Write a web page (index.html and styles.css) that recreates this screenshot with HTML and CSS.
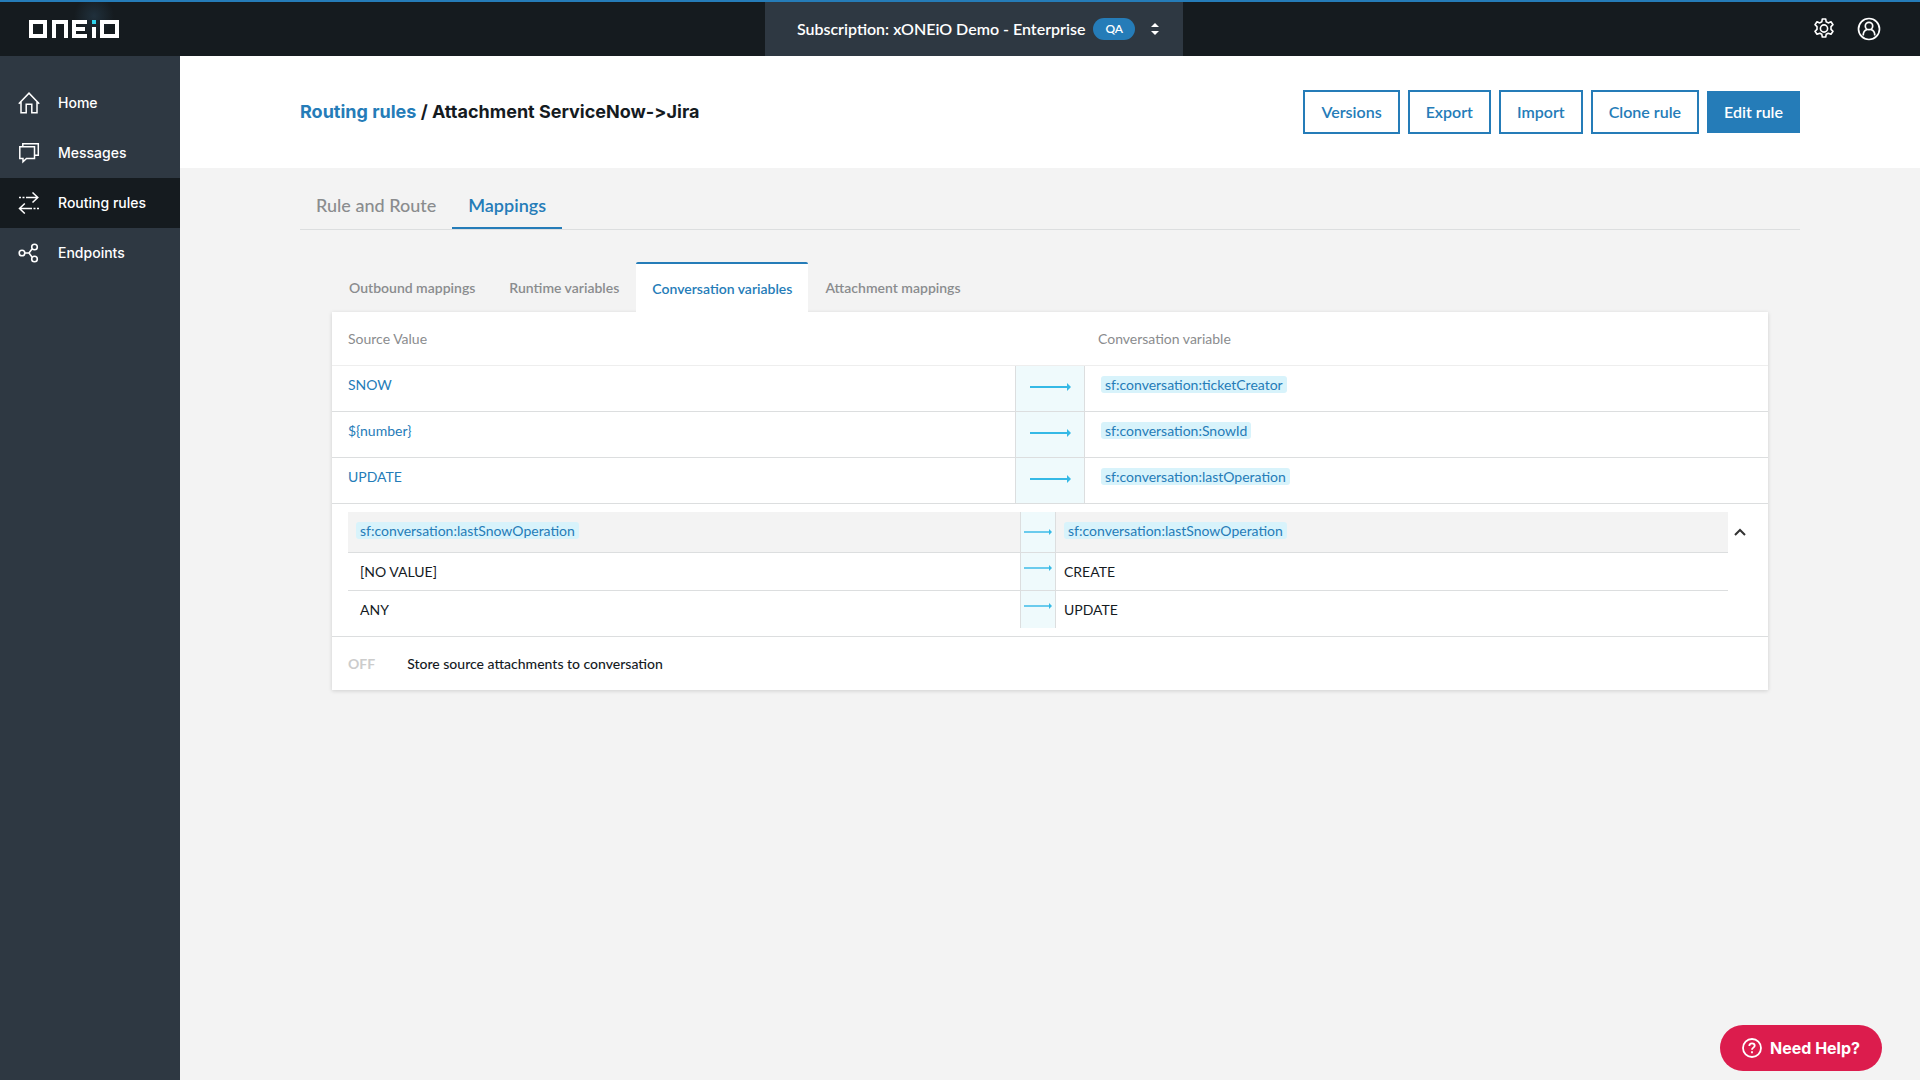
FILE: index.html
```html
<!DOCTYPE html>
<html lang="en">
<head>
    <meta charset="UTF-8">
    <meta name="viewport" content="width=device-width, initial-scale=1.0">
    <title>Routing rules - ONEiO</title>
    <link rel="stylesheet" href="styles.css">
</head>
<body>
    <!-- Arrow shapes used by the mapping tables -->
    <svg class="defs" aria-hidden="true">
        <symbol id="arrow" viewBox="0 0 41 8">
            <path d="M0 4h38" stroke="#35b9e6" stroke-width="2"/>
            <path d="M37 0l4 4-4 4z" fill="#35b9e6"/>
        </symbol>
        <symbol id="arrow-small" viewBox="0 0 28 6">
            <path d="M0 3h26" stroke="#6acbed" stroke-width="2"/>
            <path d="M25 0l3 3-3 3z" fill="#35b9e6"/>
        </symbol>
    </svg>

    <header class="topbar">
        <a class="logo" href="#" aria-label="ONEiO">
            <svg width="90" height="18" viewBox="0 0 90 18" fill="none" stroke="#fff" stroke-width="4">
                <rect x="2" y="2" width="14" height="14"/>
                <path d="M25 18V2h12v16"/>
                <path d="M58 2H45v14h13M45 9h11"/>
                <path d="M65 7v11"/>
                <path d="M65 0v4" stroke="#2fd5ee"/>
                <rect x="73" y="2" width="15" height="14"/>
            </svg>
        </a>
        <button class="subscription">
            Subscription: xONEiO Demo - Enterprise
            <span class="badge">QA</span>
            <svg width="8" height="12" viewBox="0 0 8 12" fill="#fff"><path d="M4 0l4 4H0zM4 12l4-4H0z"/></svg>
        </button>
        <div class="topbar-actions">
            <button class="icon-btn" aria-label="Settings">
                <svg width="22" height="22" viewBox="0 0 22 22" fill="none" stroke="#fff" stroke-width="1.6" stroke-linejoin="round">
                    <path d="M9.3 1h3.4l.5 2.8 2 1.1 2.8-1.2 2 3-2 1.9v2.8l2 1.9-2 3-2.8-1.1-2 1.1-.5 2.7H9.3l-.5-2.7-2-1.1L4 16.3l-2-3 2-1.9V8.6l-2-1.9 2-3 2.8 1.2 2-1.1z"/>
                    <circle cx="11" cy="10.5" r="3.6"/>
                </svg>
            </button>
            <button class="icon-btn" aria-label="Account">
                <svg width="24" height="24" viewBox="0 0 24 24" fill="none" stroke="#fff" stroke-width="1.7">
                    <circle cx="12" cy="12" r="10.5"/>
                    <circle cx="12" cy="9" r="3.7"/>
                    <path d="M6.2 18.5c0-3.5 2-5.5 4-6M17.8 18.5c0-3.5-2-5.5-4-6"/>
                </svg>
            </button>
        </div>
    </header>

    <div class="layout">
        <nav class="sidebar">
            <a class="nav-item" href="#">
                <svg width="22" height="22" viewBox="0 0 22 22" fill="none" stroke="#fff" stroke-width="1.5">
                    <path d="M.8 11.7L11 1.2l10.2 10.5M3 10v10.7h5.2v-8.5h5.6v8.5H19V10"/>
                </svg>
                Home
            </a>
            <a class="nav-item" href="#">
                <svg width="22" height="22" viewBox="0 0 22 22" fill="none" stroke="#fff" stroke-width="1.5">
                    <path d="M1.8 4.8h14.7v11.7H8.5l-3.5 3.3v-3.3H1.8z"/>
                    <path d="M4.8 4.5V1.8h15.5v11.5h-3.5"/>
                </svg>
                Messages
            </a>
            <a class="nav-item active" href="#">
                <svg width="22" height="22" viewBox="0 0 22 22" fill="none" stroke="#fff" stroke-width="1.5">
                    <path d="M8 5.5h12M14.5.5l5.3 5-5.3 5M1 5.5h2M4.5 5.5h2M14 16.5H1.5M6.8 11.5l-5.3 5 5.3 5M15.5 16.5h2M19 16.5h2"/>
                </svg>
                Routing rules
            </a>
            <a class="nav-item" href="#">
                <svg width="22" height="22" viewBox="0 0 22 22" fill="none" stroke="#fff" stroke-width="1.6">
                    <circle cx="4" cy="11" r="2.8"/>
                    <circle cx="16.5" cy="5" r="2.8"/>
                    <circle cx="16.5" cy="17" r="2.8"/>
                    <path d="M6.8 11h4.2l3-4M11 11l3 4"/>
                </svg>
                Endpoints
            </a>
        </nav>

        <main class="main">
            <div class="page-header">
                <div class="container page-header-row">
                    <h1 class="page-title"><a href="#">Routing rules</a> / Attachment ServiceNow-&gt;Jira</h1>
                    <div class="actions">
                        <button class="btn">Versions</button>
                        <button class="btn">Export</button>
                        <button class="btn">Import</button>
                        <button class="btn">Clone rule</button>
                        <button class="btn btn-primary">Edit rule</button>
                    </div>
                </div>
            </div>

            <div class="container">
                <nav class="tabs">
                    <a class="tab" href="#">Rule and Route</a>
                    <a class="tab active" href="#">Mappings</a>
                </nav>

                <section class="mappings">
                    <nav class="subtabs">
                        <a class="subtab" href="#">Outbound mappings</a>
                        <a class="subtab" href="#">Runtime variables</a>
                        <a class="subtab active" href="#">Conversation variables</a>
                        <a class="subtab" href="#">Attachment mappings</a>
                    </nav>

                    <div class="card">
                        <table class="map-table">
                            <thead>
                                <tr>
                                    <th>Source Value</th>
                                    <th class="arrow-head"></th>
                                    <th class="target-head">Conversation variable</th>
                                </tr>
                            </thead>
                            <tbody>
                                <tr>
                                    <td>SNOW</td>
                                    <td class="arrow-cell"><svg width="41" height="8"><use href="#arrow"/></svg></td>
                                    <td><span class="chip">sf:conversation:ticketCreator</span></td>
                                </tr>
                                <tr>
                                    <td>${number}</td>
                                    <td class="arrow-cell"><svg width="41" height="8"><use href="#arrow"/></svg></td>
                                    <td><span class="chip">sf:conversation:SnowId</span></td>
                                </tr>
                                <tr>
                                    <td>UPDATE</td>
                                    <td class="arrow-cell"><svg width="41" height="8"><use href="#arrow"/></svg></td>
                                    <td><span class="chip">sf:conversation:lastOperation</span></td>
                                </tr>
                            </tbody>
                        </table>

                        <div class="group">
                            <table class="value-table">
                                <thead>
                                    <tr>
                                        <th><span class="chip">sf:conversation:lastSnowOperation</span></th>
                                        <th class="arrow-cell"><svg width="28" height="6"><use href="#arrow-small"/></svg></th>
                                        <th><span class="chip">sf:conversation:lastSnowOperation</span></th>
                                    </tr>
                                </thead>
                                <tbody>
                                    <tr>
                                        <td>[NO VALUE]</td>
                                        <td class="arrow-cell"><svg width="28" height="6"><use href="#arrow-small"/></svg></td>
                                        <td>CREATE</td>
                                    </tr>
                                    <tr>
                                        <td>ANY</td>
                                        <td class="arrow-cell"><svg width="28" height="6"><use href="#arrow-small"/></svg></td>
                                        <td>UPDATE</td>
                                    </tr>
                                </tbody>
                            </table>
                            <button class="collapse-btn" aria-label="Collapse">
                                <svg width="12" height="8" viewBox="0 0 12 8" fill="none" stroke="#333" stroke-width="2"><path d="M1 7l5-5 5 5"/></svg>
                            </button>
                        </div>

                        <div class="store-row">
                            <span class="state">OFF</span>
                            <span>Store source attachments to conversation</span>
                        </div>
                    </div>
                </section>
            </div>
        </main>
    </div>

    <button class="help-btn">
        <svg width="20" height="20" viewBox="0 0 20 20" fill="none" stroke="#fff" stroke-width="1.8">
            <circle cx="10" cy="10" r="9"/>
            <path d="M7.3 8c0-1.7 1.2-2.7 2.7-2.7s2.7 1 2.7 2.4c0 1.9-2.7 2-2.7 4M10 13.3v2"/>
        </svg>
        Need Help?
    </button>
</body>
</html>
```
FILE: styles.css
```css
* {
    box-sizing: border-box;
}

body {
    margin: 0;
    min-height: 100vh;
    display: flex;
    flex-direction: column;
    font-family: Lato, sans-serif;
    font-size: 14px;
    line-height: 20px;
    color: #151b1f;
    background-color: #f3f3f3;
}

a {
    color: inherit;
    text-decoration: none;
}

button {
    font: inherit;
    border: none;
    cursor: pointer;
}

.defs {
    display: none;
}

/* Top bar */
.topbar {
    display: flex;
    justify-content: space-between;
    align-items: stretch;
    height: 56px;
    border-top: 2px solid #257cb8;
    background-color: #151b1f;
}

.logo {
    display: flex;
    align-items: center;
    padding: 0 16px 0 29px;
    background: radial-gradient(circle at 94px 14px, #20303c 0, #151b1f 20px);
}

.subscription {
    display: flex;
    align-items: center;
    gap: 8px;
    padding: 0 24px 0 32px;
    font-size: 16px;
    font-weight: 600;
    color: #fff;
    background-color: #2e3842;
}

.subscription svg {
    margin: 0 0 0 8px;
}

.badge {
    padding: 1px 12px;
    border-radius: 11px;
    font-size: 12px;
    background-color: #257cb8;
}

.topbar-actions {
    display: flex;
    align-items: center;
    justify-content: flex-end;
    gap: 22px;
    padding-right: 39px;
}

.icon-btn {
    display: flex;
    padding: 0;
    background: none;
}

/* Sidebar */
.layout {
    display: flex;
    flex: 1;
}

.sidebar {
    width: 180px;
    flex-shrink: 0;
    padding-top: 22px;
    background-color: #2e3842;
}

.nav-item {
    display: flex;
    align-items: center;
    gap: 18px;
    height: 50px;
    padding: 0 18px;
    font-family: Inter, sans-serif;
    font-size: 14px;
    font-weight: 500;
    color: #fff;
}

.nav-item.active {
    background-color: #151b1f;
}

/* Page header */
.main {
    flex: 1;
}

.container {
    max-width: 1500px;
    margin: 0 auto;
}

.page-header {
    background-color: #fff;
}

.page-header-row {
    display: flex;
    align-items: center;
    justify-content: space-between;
    height: 112px;
}

.page-title {
    margin: 0;
    font-family: Inter, sans-serif;
    font-size: 18px;
    font-weight: 700;
    font-variant-ligatures: none;
}

.page-title a {
    color: #257cb8;
}

.actions {
    display: flex;
    align-items: center;
    gap: 8px;
}

.btn {
    padding: 10px 16px;
    border: 2px solid #257cb8;
    font-size: 16px;
    font-weight: 600;
    color: #257cb8;
    background-color: #fff;
}

.btn-primary {
    padding: 11px 17px;
    border: none;
    color: #fff;
    background-color: #257cb8;
}

/* Tabs */
.tabs {
    display: flex;
    padding-top: 16px;
    border-bottom: 1px solid #dcdedf;
}

.tab {
    padding: 11px 16px 12px;
    border-bottom: 2px solid transparent;
    font-size: 18px;
    font-weight: 500;
    color: #8a8c8e;
}

.tab.active {
    border-color: #257cb8;
    font-weight: 600;
    color: #257cb8;
}

.mappings {
    padding: 32px;
}

.subtabs {
    display: flex;
}

.subtab {
    padding: 16px 17px 14px;
    font-weight: 600;
    color: #8a8c8e;
}

.subtab.active {
    padding: 15px 16px 13px;
    border-top: 2px solid #257cb8;
    border-radius: 2px 2px 0 0;
    color: #257cb8;
    background-color: #fff;
}

/* Mapping tables */
.card {
    background-color: #fff;
    box-shadow: 0 1px 4px rgba(0, 0, 0, 0.15);
}

.map-table,
.value-table {
    width: 100%;
    table-layout: fixed;
    border-spacing: 0;
}

.map-table th,
.map-table td {
    padding: 9px 16px 16px;
    border-bottom: 1px solid #dcdedf;
    text-align: left;
    color: #257cb8;
}

.map-table th {
    padding: 17px 16px 16px;
    border-color: #eee;
    font-weight: 400;
    color: #8a8c8e;
}

.map-table .arrow-head {
    width: 70px;
}

.map-table .target-head {
    padding-left: 13px;
}

.map-table .arrow-cell,
.value-table .arrow-cell {
    padding: 0;
    border-left: 1px solid #dcdedf;
    border-right: 1px solid #dcdedf;
    text-align: center;
    background-color: #effafc;
}

.map-table .arrow-cell {
    padding-bottom: 4px;
}

.arrow-cell svg {
    display: block;
    margin: 0 auto;
}

.chip {
    padding: 0 4px;
    border-radius: 3px;
    color: #257cb8;
    background-color: #d8f3fb;
}

.group {
    display: flex;
    align-items: flex-start;
    padding: 8px 16px 8px;
    border-bottom: 1px solid #dcdedf;
}

.value-table th,
.value-table td {
    height: 38px;
    padding: 0 8px;
    border-bottom: 1px solid #dcdedf;
    text-align: left;
    font-weight: 400;
}

.value-table th {
    height: 41px;
    padding-bottom: 2px;
    background-color: #f3f3f3;
}

.value-table td:first-child {
    padding-left: 12px;
}

.value-table th.arrow-cell {
    width: 36px;
}

.value-table tr:last-child td {
    height: 37px;
    border-bottom: none;
}

.value-table td.arrow-cell {
    padding-top: 12px;
    vertical-align: top;
}

.collapse-btn {
    flex-shrink: 0;
    width: 24px;
    padding: 16px 6px;
    background: none;
}

.collapse-btn svg {
    display: block;
}

.store-row {
    display: flex;
    gap: 32px;
    padding: 17px 16px 16px;
    font-weight: 500;
}

.state {
    font-weight: 700;
    color: #ccc;
}

/* Help widget */
.help-btn {
    position: fixed;
    right: 38px;
    bottom: 9px;
    display: flex;
    align-items: center;
    gap: 8px;
    height: 46px;
    padding: 0 22px;
    border-radius: 23px;
    font-family: Inter, sans-serif;
    font-size: 16px;
    font-weight: 700;
    color: #fff;
    background-color: #dc1c4d;
}
```
